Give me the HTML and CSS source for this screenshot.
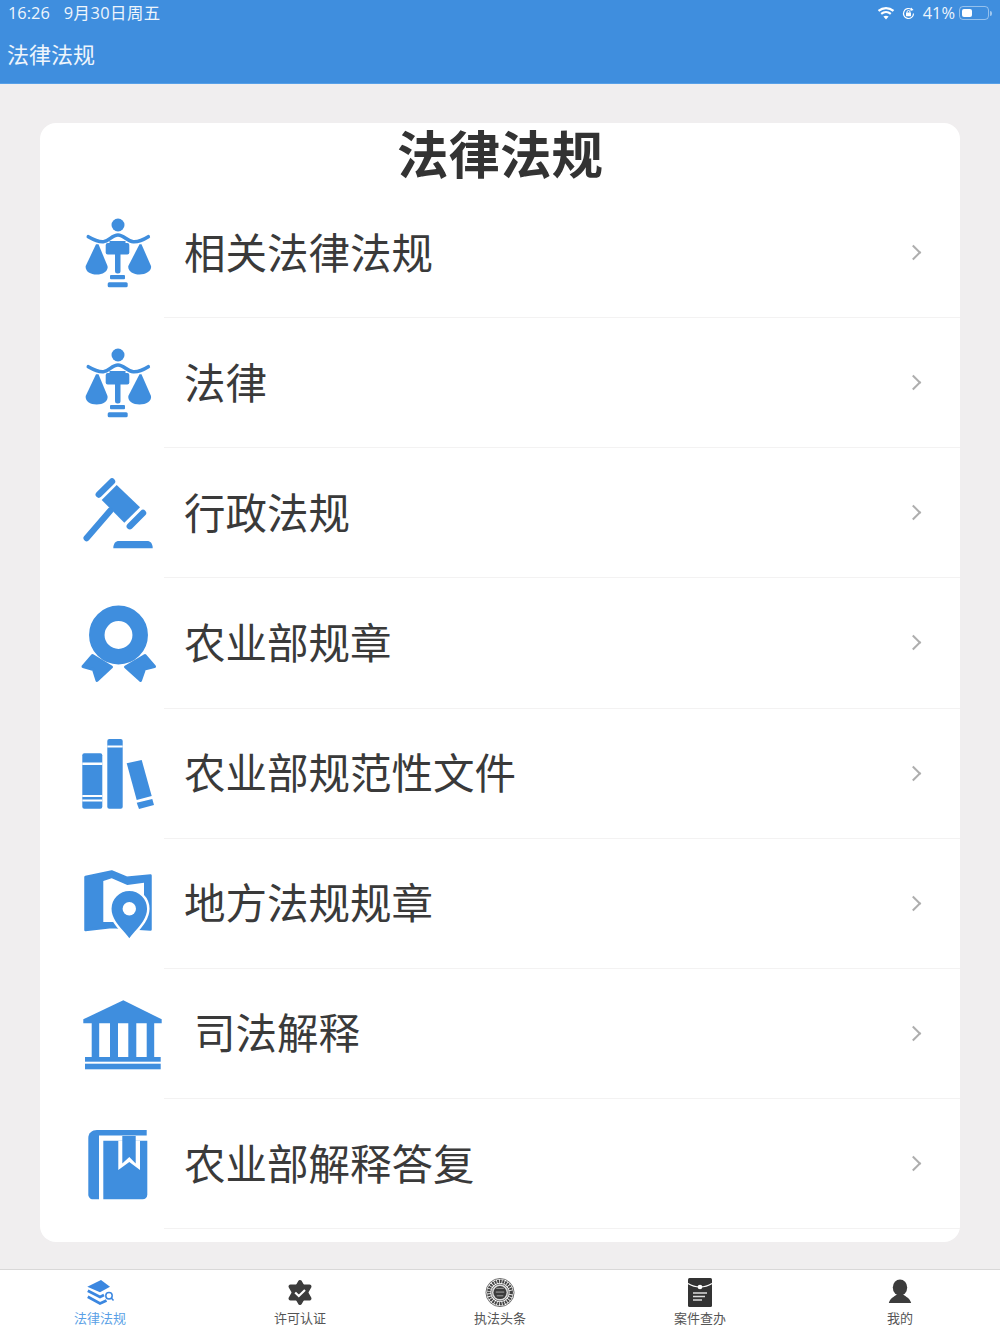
FILE: index.html
```html
<!DOCTYPE html>
<html lang="zh-CN">

<head>
    <meta charset="UTF-8">
    <meta name="viewport" content="width=device-width, initial-scale=1.0">
    <title>法律法规</title>
    <link rel="stylesheet" href="styles.css">
</head>

<body>
    <svg class="defs" width="0" height="0">
        <symbol id="scale" viewBox="0 0 84 84">
            <circle cx="38" cy="14" r="6.5" />
            <path class="beam" d="M8.3 25.7C14 29 18 31 23.3 30.7C29 30.3 32 24 38 24C44 24 47 30.3 53.3 30.7C58 31 63 29 68.3 25.7" />
            <path d="M16 33.3L5.7 55C5 60 10 63.5 16.7 63.5C23 63.5 28.5 60 27.5 55L18.5 33.3Z" />
            <path d="M59.5 33.3L48.3 55C47.5 60 53 63.5 59.5 63.5C66 63.5 72 60 71 55L61.5 33.3Z" />
            <rect x="25.7" y="32" width="23.6" height="11.5" rx="2" />
            <rect x="29.5" y="30" width="16" height="4" />
            <rect x="35" y="40" width="5.5" height="22.5" rx="2.5" />
            <rect x="30" y="64" width="15" height="4.3" rx="1" />
            <rect x="27.7" y="71.3" width="20" height="5" rx="1.5" />
        </symbol>
    </svg>

    <header class="top">
        <div class="status">
            <div class="status__time">
                <span>16:26</span>
                <span class="status__date">9月30日周五</span>
            </div>
            <div class="status__right">
                <svg class="status__wifi" width="18" height="13" viewBox="0 0 18 13">
                    <path d="M9 12.5L6.4 9.6C8 8.3 10 8.3 11.6 9.6Z" />
                    <path class="wifi-arc" d="M4.2 6.9C7 4.6 11 4.6 13.8 6.9" />
                    <path class="wifi-arc" d="M1.5 3.9C6 .2 12 .2 16.5 3.9" />
                </svg>
                <svg class="status__lock" width="13" height="13" viewBox="0 0 13 13">
                    <path class="lock-ring" d="M11.5 6.5A5 5 0 1 1 9.5 2.5" />
                    <path d="M9 .6L11.6 3L8.5 4Z" fill="#fff" />
                    <rect x="4" y="5.6" width="5" height="3.6" rx=".5" fill="#fff" />
                    <path class="lock-bow" d="M5 5.8V5A1.5 1.5 0 0 1 8 5V5.8" />
                </svg>
                <span class="status__pct">41%</span>
                <div class="battery">
                    <div class="battery__level"></div>
                </div>
                <div class="battery__nub"></div>
            </div>
        </div>
        <div class="top__title">法律法规</div>
    </header>

    <main class="content">
        <section class="card">
            <h1 class="card__title">法律法规</h1>

            <a class="row">
                <span class="row__icon"><svg width="84" height="84"><use href="#scale" /></svg></span>
                <span class="row__body"><span class="row__text">相关法律法规</span><i class="chevron"></i></span>
            </a>

            <a class="row">
                <span class="row__icon"><svg width="84" height="84"><use href="#scale" /></svg></span>
                <span class="row__body"><span class="row__text">法律</span><i class="chevron"></i></span>
            </a>

            <a class="row">
                <span class="row__icon">
                    <svg width="84" height="84" viewBox="0 0 84 84">
                        <path d="M36.7 14L60 36.3L44.3 51.7L21.7 29Z" />
                        <path class="bar" d="M18.8 23.5L32 10.5" />
                        <path class="bar" d="M49.8 55.2L63 42" />
                        <path class="bar" d="M30 40L6.7 67" />
                        <path d="M33.3 77.3C33.3 72.5 35.5 70 39 70H67C70.5 70 72.7 72.5 72.7 77.3Z" />
                    </svg>
                </span>
                <span class="row__body"><span class="row__text">行政法规</span><i class="chevron"></i></span>
            </a>

            <a class="row">
                <span class="row__icon">
                    <svg width="84" height="84" viewBox="0 0 84 84">
                        <circle class="ring" cx="38.5" cy="34" r="21.7" />
                        <path class="ribbon" d="M12.5 54.5L31.5 66L17 79.5L13.5 68.5L3 65.5Z" />
                        <path class="ribbon" d="M65 54.5L74.5 65.5L64.5 68L60.5 79.5L45.5 66Z" />
                    </svg>
                </span>
                <span class="row__body"><span class="row__text">农业部规章</span><i class="chevron"></i></span>
            </a>

            <a class="row">
                <span class="row__icon">
                    <svg width="84" height="84" viewBox="0 0 84 84">
                        <rect x="2.3" y="21.3" width="20" height="55.4" rx="2" />
                        <rect x="27.3" y="7" width="15.4" height="69.7" rx="2" />
                        <rect class="gap" x="2.3" y="30.5" width="20" height="2.5" />
                        <rect class="gap" x="2.3" y="63" width="20" height="2" />
                        <rect class="gap" x="2.3" y="67.5" width="20" height="2" />
                        <rect class="gap" x="27.3" y="13.5" width="15.4" height="2" />
                        <path d="M46.7 31.3L61.7 28L71.7 64L56.7 68Z" />
                        <path d="M56.7 70.7L72.3 67L74 73L59 77Z" />
                    </svg>
                </span>
                <span class="row__body"><span class="row__text">农业部规范性文件</span><i class="chevron"></i></span>
            </a>

            <a class="row">
                <span class="row__icon">
                    <svg width="84" height="84" viewBox="0 0 84 84">
                        <path class="map" d="M5.5 15L31.7 9.5L46.7 15.7L70.5 13.5V67.5L31.7 65L5.5 68Z" />
                        <path class="gap" d="M23.3 19L31.7 16.3L47.3 23L64 20.7V60H23.3Z" />
                        <path class="pin" d="M49.3 78.5C44 70 30.3 60 30.3 46.7A19 19 0 0 1 68.3 46.7C68.3 60 54.6 70 49.3 78.5Z" />
                        <circle class="gap" cx="49.3" cy="46.7" r="6.7" />
                    </svg>
                </span>
                <span class="row__body"><span class="row__text">地方法规规章</span><i class="chevron"></i></span>
            </a>

            <a class="row">
                <span class="row__icon">
                    <svg width="84" height="84" viewBox="0 0 84 84">
                        <path d="M43.3 8.3L81.7 27.3V31.3H3.3V27.3Z" />
                        <rect x="11.7" y="31" width="7.5" height="35" />
                        <rect x="30" y="31" width="8" height="35" />
                        <rect x="48.3" y="31" width="8" height="35" />
                        <rect x="66.7" y="31" width="7.5" height="35" />
                        <rect x="5" y="65" width="75.7" height="4.7" />
                        <rect x="5" y="71.7" width="75.7" height="5.6" />
                    </svg>
                </span>
                <span class="row__body"><span class="row__text row__text--shift">司法解释</span><i class="chevron"></i></span>
            </a>

            <a class="row">
                <span class="row__icon">
                    <svg width="84" height="84" viewBox="0 0 84 84">
                        <path d="M19 8H66.7V13.5H19Z" />
                        <path d="M19 8V77.3H13C10 77.3 8.3 75 8.3 72.5V16C8.3 11 12 8 17 8Z" />
                        <path d="M23.3 18.7H67.3V72.5C67.3 75.5 65.5 77.3 62.5 77.3H23.3Z" />
                        <path class="gap" d="M38.3 18.7H60V48L49.3 40L38.3 48Z" />
                        <path d="M42.3 14H55.7V41.5L49.3 35L42.3 41.5Z" />
                    </svg>
                </span>
                <span class="row__body"><span class="row__text">农业部解释答复</span><i class="chevron"></i></span>
            </a>
        </section>
    </main>

    <nav class="tabs">
        <a class="tab tab--active">
            <svg class="tab__icon" width="30" height="30" viewBox="0 0 30 30">
                <path d="M16 2L25 8.7L15 14.3L2.3 8.7Z" fill="#3b87e0" />
                <path class="layer" d="M2.8 12.7L15 19L19 17" />
                <path class="layer" d="M2.8 18.7L15 25.5L21.5 22.5" />
                <circle class="lens" cx="24" cy="17.7" r="3.2" />
                <path class="lens" d="M26.3 20L28.5 22.5" />
            </svg>
            <span class="tab__label">法律法规</span>
        </a>
        <a class="tab">
            <svg class="tab__icon" width="30" height="30" viewBox="0 0 30 30">
                <path class="badge" d="M15 4L24.5 20.5H5.5Z" />
                <path class="badge" d="M15 25L5.5 8.5H24.5Z" />
                <path class="check" d="M10.2 14.5L13.8 18L20 12" />
            </svg>
            <span class="tab__label">许可认证</span>
        </a>
        <a class="tab">
            <svg class="tab__icon" width="32" height="32" viewBox="0 0 32 32">
                <circle cx="16" cy="15.5" r="15" fill="#fff" stroke="#666" stroke-width="1" />
                <circle cx="16" cy="15.5" r="12" fill="none" stroke="#444" stroke-width="3.6" stroke-dasharray="2 .8" />
                <circle cx="16" cy="15.5" r="9" fill="#ddd" stroke="#555" stroke-width=".8" />
                <circle cx="16" cy="15.5" r="7" fill="#3c3c3c" />
                <path d="M12 11H20M11.5 15H20.5M12.5 19H19.5" stroke="#aaa" stroke-width="1" />
            </svg>
            <span class="tab__label">执法头条</span>
        </a>
        <a class="tab">
            <svg class="tab__icon" width="30" height="30" viewBox="0 0 30 30">
                <rect x="3" y="0" width="24" height="29" rx="1.5" fill="#333" />
                <path d="M3 5.5C7 8 11 9 15 9C19 9 23 8 27 5.5" fill="none" stroke="#fff" stroke-width="1.3" />
                <circle cx="15" cy="9" r="2.3" fill="#fff" />
                <path d="M8 15H22M8 18.5H20M8 22H17" stroke="#ddd" stroke-width="1.4" />
            </svg>
            <span class="tab__label">案件查办</span>
        </a>
        <a class="tab">
            <svg class="tab__icon" width="30" height="30" viewBox="0 0 30 30">
                <ellipse cx="15" cy="9.5" rx="7.2" ry="8" fill="#3c3c3c" />
                <path d="M3.8 25C5 20.5 9 18.5 12 16.5H18C21 18.5 25 20.5 26.2 25Z" fill="#3c3c3c" />
            </svg>
            <span class="tab__label">我的</span>
        </a>
    </nav>
</body>

</html>
```

FILE: styles.css
```css
* {
  box-sizing: border-box;
  padding: 0;
  margin: 0;
}

body {
  width: 1000px;
  height: 1334px;
  display: flex;
  flex-direction: column;
  overflow: hidden;
  background-color: #f0eeef;
  font-family: "Noto Sans CJK SC", "Noto Sans", sans-serif;
}

.defs {
  display: block;
  height: 0;
}

/* top blue bar */
.top {
  height: 84px;
  background-color: #3f8ede;
  border-bottom: 1px solid #57a0e8;
  color: #eef5fc;
}

.status {
  height: 26px;
  padding: 0 8px;
  display: flex;
  justify-content: space-between;
  align-items: center;
  font-family: "Open Sans", "Noto Sans CJK SC", sans-serif;
  font-size: 16.4px;
  line-height: 22px;
}

.status__time {
  display: flex;
  gap: 14px;
}

.status__date {
  letter-spacing: .45px;
}

.status__right {
  display: flex;
  align-items: center;
}

.status__wifi {
  fill: #fff;
  margin-right: 7px;
}

.wifi-arc {
  fill: none;
  stroke: #fff;
  stroke-width: 2.2;
}

.status__lock {
  fill: none;
  margin-right: 8px;
}

.lock-ring {
  stroke: #fff;
  stroke-width: 1.2;
}

.lock-bow {
  stroke: #fff;
  stroke-width: 1;
}

.status__pct {
  margin-right: 4px;
}

.battery {
  width: 30px;
  height: 14px;
  padding: 2px;
  border: 1px solid rgba(255, 255, 255, .45);
  border-radius: 4px;
}

.battery__level {
  width: 10px;
  height: 100%;
  background-color: #fff;
  border-radius: 2px;
}

.battery__nub {
  width: 2px;
  height: 5px;
  margin-left: 1px;
  background-color: rgba(255, 255, 255, .5);
  border-radius: 0 2px 2px 0;
}

.top__title {
  padding: 7px 0 0 7px;
  font-size: 22px;
  line-height: 40px;
  font-weight: 400;
}

/* main card */
.content {
  flex: 1;
  padding: 39px 40px 0;
}

.card {
  height: 1119px;
  background-color: #fff;
  border-radius: 16px;
}

.card__title {
  height: 65px;
  font-size: 51.5px;
  line-height: 57px;
  font-weight: 700;
  text-align: center;
  color: #333;
}

.row {
  height: 130.15px;
  display: flex;
}

.row__icon {
  width: 124px;
  padding-left: 40px;
  display: flex;
  align-items: center;
}

.row__icon svg {
  fill: #3f8ede;
}

.row__body {
  flex: 1;
  display: flex;
  align-items: center;
  justify-content: space-between;
  padding: 0 41px 0 20px;
  border-bottom: 1px solid #f3f2f2;
}

.row__text {
  margin-top: -4px;
  font-size: 41.5px;
  font-weight: 400;
  color: #3a3a3a;
}

.row__text--shift {
  margin-left: 10px;
}

.chevron {
  width: 11px;
  height: 11px;
  border-top: 2px solid #aeaeae;
  border-right: 2px solid #aeaeae;
  transform: rotate(45deg);
}

/* shapes inside the row icons */
.beam {
  fill: none;
  stroke: #3f8ede;
  stroke-width: 3.6;
  stroke-linecap: round;
}

.bar {
  fill: none;
  stroke: #3f8ede;
  stroke-width: 6.4;
  stroke-linecap: round;
}

.ring {
  fill: none;
  stroke: #3f8ede;
  stroke-width: 15.5;
}

.ribbon {
  stroke: #3f8ede;
  stroke-width: 3;
  stroke-linejoin: round;
}

.map {
  stroke: #3f8ede;
  stroke-width: 2.5;
  stroke-linejoin: round;
}

.gap {
  fill: #fff;
}

.pin {
  stroke: #fff;
  stroke-width: 2.5;
}

/* bottom tabs */
.tabs {
  height: 65px;
  display: flex;
  background-color: #fff;
  border-top: 1px solid #d9d8d8;
}

.tab {
  flex: 1;
  display: flex;
  flex-direction: column;
  align-items: center;
  padding-top: 8px;
}

.tab__icon {
  height: 30px;
}

.tab__label {
  font-size: 13px;
  line-height: 19px;
  color: #555;
}

.tab--active .tab__label {
  color: #5a9fe6;
}

.layer {
  fill: none;
  stroke: #3b87e0;
  stroke-width: 2.8;
}

.lens {
  fill: none;
  stroke: #3b87e0;
  stroke-width: 1.5;
}

.badge {
  fill: #3c3c3c;
  stroke: #3c3c3c;
  stroke-width: 4;
  stroke-linejoin: round;
}

.check {
  fill: none;
  stroke: #fff;
  stroke-width: 2.2;
}
```
